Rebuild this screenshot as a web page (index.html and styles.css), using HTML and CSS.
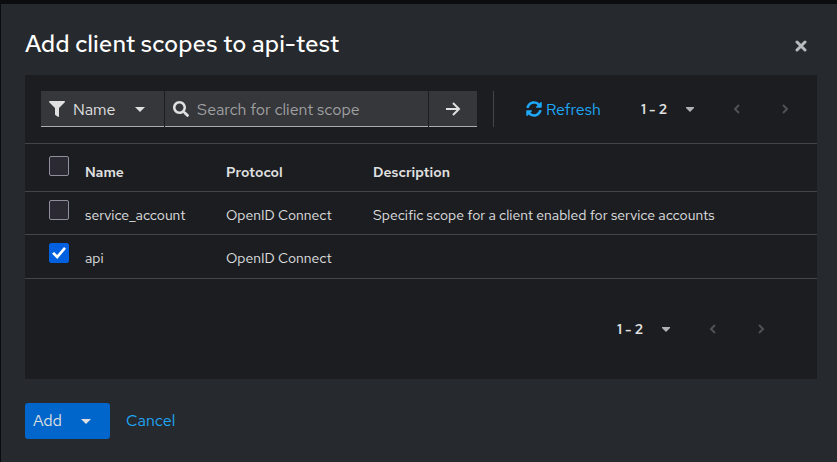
FILE: index.html
```html
<!DOCTYPE html>
<html lang="en">
<head>
<meta charset="utf-8">
<title>Add client scopes</title>
<link rel="stylesheet" href="styles.css">
</head>
<body>
<main class="modal" role="dialog" aria-labelledby="modal-title">
  <header class="modal-header">
    <h1 id="modal-title">Add client scopes to api-test</h1>
    <button class="close" type="button" aria-label="Close">
      <svg class="icon-close" viewBox="0 0 12 12"><path d="M2 2l8 8M10 2l-8 8"/></svg>
    </button>
  </header>

  <section class="panel">
    <div class="toolbar">
      <div class="search-group">
        <button class="filter" type="button">
          <svg class="icon" viewBox="0 0 512 512"><path d="M487.976 0H24.028C2.71 0-8.047 25.866 7.058 40.971L192 225.941V432c0 7.831 3.821 15.17 10.237 19.662l80 55.98C298.02 518.69 320 507.493 320 487.98V225.941l184.947-184.97C520.021 25.896 509.338 0 487.976 0z"/></svg>
          <span>Name</span>
          <svg class="caret" viewBox="0 0 10 5"><path d="M0 0h10L5 5z"/></svg>
        </button>
        <label class="search">
          <svg class="icon" viewBox="0 0 512 512"><path d="M505 442.7L405.3 343c-4.5-4.5-10.6-7-17-7H372c27.6-35.3 44-79.7 44-128C416 93.1 322.9 0 208 0S0 93.1 0 208s93.1 208 208 208c48.3 0 92.7-16.4 128-44v16.3c0 6.4 2.5 12.5 7 17l99.7 99.7c9.4 9.4 24.6 9.4 33.9 0l28.3-28.3c9.4-9.4 9.4-24.6.1-34zM208 336c-70.7 0-128-57.2-128-128 0-70.7 57.2-128 128-128 70.7 0 128 57.2 128 128 0 70.7-57.2 128-128 128z"/></svg>
          <input type="text" placeholder="Search for client scope" aria-label="Search for client scope">
        </label>
        <button class="go" type="button" aria-label="Search">
          <svg class="icon-arrow" viewBox="0 0 16 16"><path d="M1 8h13M8 2l6 6-6 6"/></svg>
        </button>
      </div>
      <button class="refresh" type="button">
        <svg class="icon" viewBox="0 0 512 512"><path d="M370.72 133.28C339.458 104.008 298.888 87.962 255.848 88c-77.458.068-144.328 53.178-162.791 126.85-1.344 5.363-6.122 9.15-11.651 9.15H24.103c-7.498 0-13.194-6.807-11.807-14.176C33.933 94.924 134.813 8 256 8c66.448 0 126.791 26.136 171.315 68.685L463.03 40.97C478.149 25.851 504 36.559 504 57.941V192c0 13.255-10.745 24-24 24H345.941c-21.382 0-32.09-25.851-16.971-40.971l41.75-41.749zM32 296h134.059c21.382 0 32.09 25.851 16.971 40.971l-41.75 41.75c31.262 29.273 71.835 45.319 114.876 45.28 77.418-.07 144.315-53.144 162.787-126.849 1.344-5.363 6.122-9.15 11.651-9.15h57.304c7.498 0 13.194 6.807 11.807 14.176C478.067 417.076 377.187 504 256 504c-66.448 0-126.791-26.136-171.315-68.685L48.97 471.03C33.851 486.149 8 475.441 8 454.059V320c0-13.255 10.745-24 24-24z"/></svg>
        <span>Refresh</span>
      </button>
      <nav class="pager" aria-label="Pagination">
        <button class="range" type="button"><span>1 - 2</span><svg class="caret" viewBox="0 0 8 5"><path d="M0 0h8v1L4 5 0 1z"/></svg></button>
        <button class="step" type="button" disabled aria-label="Previous page"><svg class="chevron" viewBox="0 0 8 12"><path d="M6 2L2 6l4 4"/></svg></button>
        <button class="step" type="button" disabled aria-label="Next page"><svg class="chevron" viewBox="0 0 8 12"><path d="M2 2l4 4-4 4"/></svg></button>
      </nav>
    </div>

    <table class="scopes">
      <thead>
        <tr><th class="pick"><input type="checkbox" aria-label="Select all rows"></th><th class="name">Name</th><th class="protocol">Protocol</th><th>Description</th></tr>
      </thead>
      <tbody>
        <tr><td class="pick"><input type="checkbox" aria-label="Select service_account"></td><td>service_account</td><td>OpenID Connect</td><td>Specific scope for a client enabled for service accounts</td></tr>
        <tr><td class="pick"><input type="checkbox" aria-label="Select api" checked></td><td>api</td><td>OpenID Connect</td><td></td></tr>
      </tbody>
    </table>

    <div class="panel-footer">
      <nav class="pager" aria-label="Bottom pagination">
        <button class="range" type="button"><span>1 - 2</span><svg class="caret" viewBox="0 0 8 5"><path d="M0 0h8v1L4 5 0 1z"/></svg></button>
        <button class="step" type="button" disabled aria-label="Previous page"><svg class="chevron" viewBox="0 0 8 12"><path d="M6 2L2 6l4 4"/></svg></button>
        <button class="step" type="button" disabled aria-label="Next page"><svg class="chevron" viewBox="0 0 8 12"><path d="M2 2l4 4-4 4"/></svg></button>
      </nav>
    </div>
  </section>

  <footer class="actions">
    <button class="add" type="button"><span>Add</span><svg class="caret" viewBox="0 0 10 5"><path d="M0 0h10L5 5z"/></svg></button>
    <button class="cancel" type="button">Cancel</button>
  </footer>
</main>
</body>
</html>
```
FILE: styles.css
```css
* { box-sizing: border-box; }

body {
  margin: 0;
  padding: 4px 0 0 1px;
  background: #0b0c0d;
  color: #e0e0e0;
  font-family: "Red Hat Text", Lato, sans-serif;
  font-size: 16px;
  line-height: 24px;
}

button, input {
  margin: 0;
  padding: 0;
  border: 0;
  background: none;
  color: inherit;
  font: inherit;
}

svg { display: block; flex: none; fill: currentColor; }
.icon { width: 16px; height: 16px; }
.caret { width: 10px; height: 5px; }

.modal {
  min-height: calc(100vh - 4px);
  padding: 24px 20px 24px 24px;
  background: #26292d;
}

.modal-header {
  display: flex;
  align-items: center;
  justify-content: space-between;
  height: 31px;
  margin-bottom: 16px;
}

h1 {
  margin: 0;
  color: #fff;
  font-size: 24px;
  font-weight: 500;
  line-height: 31px;
}

.close {
  display: grid;
  place-items: center;
  width: 32px;
  height: 32px;
  padding-top: 4px;
  color: #b8bbbe;
}

.icon-close { width: 12px; height: 12px; }
.icon-close path { fill: none; stroke: currentColor; stroke-width: 3; stroke-linecap: round; }

.panel { background: #1b1d21; }

.toolbar {
  display: flex;
  align-items: center;
  height: 68px;
  padding: 0 8px 0 16px;
}

.search-group {
  display: flex;
  flex: 1;
  gap: 1px;
  height: 36px;
  padding-right: 16px;
  border-right: 1px solid #444548;
}

.filter, .search, .go {
  display: flex;
  align-items: center;
  gap: 8px;
  background: #36373a;
  box-shadow: inset 0 -1px #aaabac;
}

.filter { width: 123px; padding: 0 19px 0 8px; }
.filter .caret { margin-left: auto; }
.search { flex: 1; padding: 0 8px; }
.search input { flex: 1; width: 0; outline: 0; }
.search input::placeholder { color: #a0a1a3; opacity: 1; }
.go { width: 48px; justify-content: center; }
.icon-arrow { width: 16px; height: 16px; }
.icon-arrow path { fill: none; stroke: currentColor; stroke-width: 2; }

.filter span, .search input, .refresh span { padding-top: 1px; }

.refresh {
  display: flex;
  align-items: center;
  gap: 4px;
  width: 115px;
  padding-left: 32px;
  color: #1fa7f8;
}

.pager { display: flex; align-items: center; width: 200px; }

.range {
  display: flex;
  flex: 1;
  align-items: center;
  justify-content: space-between;
  height: 36px;
  padding: 0 18px 0 32px;
  font-size: 14px;
  font-weight: 600;
}

.range .caret { width: 8px; height: 5px; margin-right: 1px; color: #b0b1b3; }
.step { display: grid; place-items: center; width: 48px; height: 36px; color: #505154; }
.chevron { width: 8px; height: 12px; }
.chevron path { fill: none; stroke: currentColor; stroke-width: 2; }

.scopes {
  width: 100%;
  border-collapse: collapse;
  table-layout: fixed;
  border-top: 1px solid #444548;
  font-size: 14px;
  line-height: 20px;
  text-align: left;
}

.scopes tr { height: 43px; border-bottom: 1px solid #444548; }
.scopes thead tr { height: 48px; }
.scopes tbody tr:last-child { height: 44px; }
.scopes th { padding: 8px 0 0; font-weight: 600; vertical-align: middle; }
.scopes td { padding: 13px 0 0; vertical-align: top; }
.scopes .pick { width: 60px; padding: 8px 0 0 24px; }
.scopes th.pick { padding: 0 0 4px 24px; }
.scopes .name { width: 141px; }
.scopes .protocol { width: 147px; }

.scopes input {
  display: block;
  appearance: none;
  width: 20px;
  height: 20px;
  border: 1px solid #8f8f9d;
  border-radius: 2px;
  background: #2b2a33;
}

.scopes input:checked {
  border-color: #0060df;
  background: #0060df;
  display: grid;
  place-items: center;
}

.scopes input:checked::before {
  content: "";
  width: 14px;
  height: 12px;
  background: #fff;
  clip-path: polygon(0 55%, 15% 42%, 37% 66%, 86% 0, 100% 14%, 38% 100%);
}

.panel-footer {
  display: flex;
  justify-content: flex-end;
  padding: 32px;
}

.actions { display: flex; gap: 16px; margin-top: 24px; }
.add {
  display: flex;
  align-items: center;
  justify-content: space-between;
  width: 85px;
  height: 36px;
  padding: 0 19px 0 8px;
  border-radius: 3px;
  background: #0066cc;
}
.cancel { color: #1fa7f8; }
```
